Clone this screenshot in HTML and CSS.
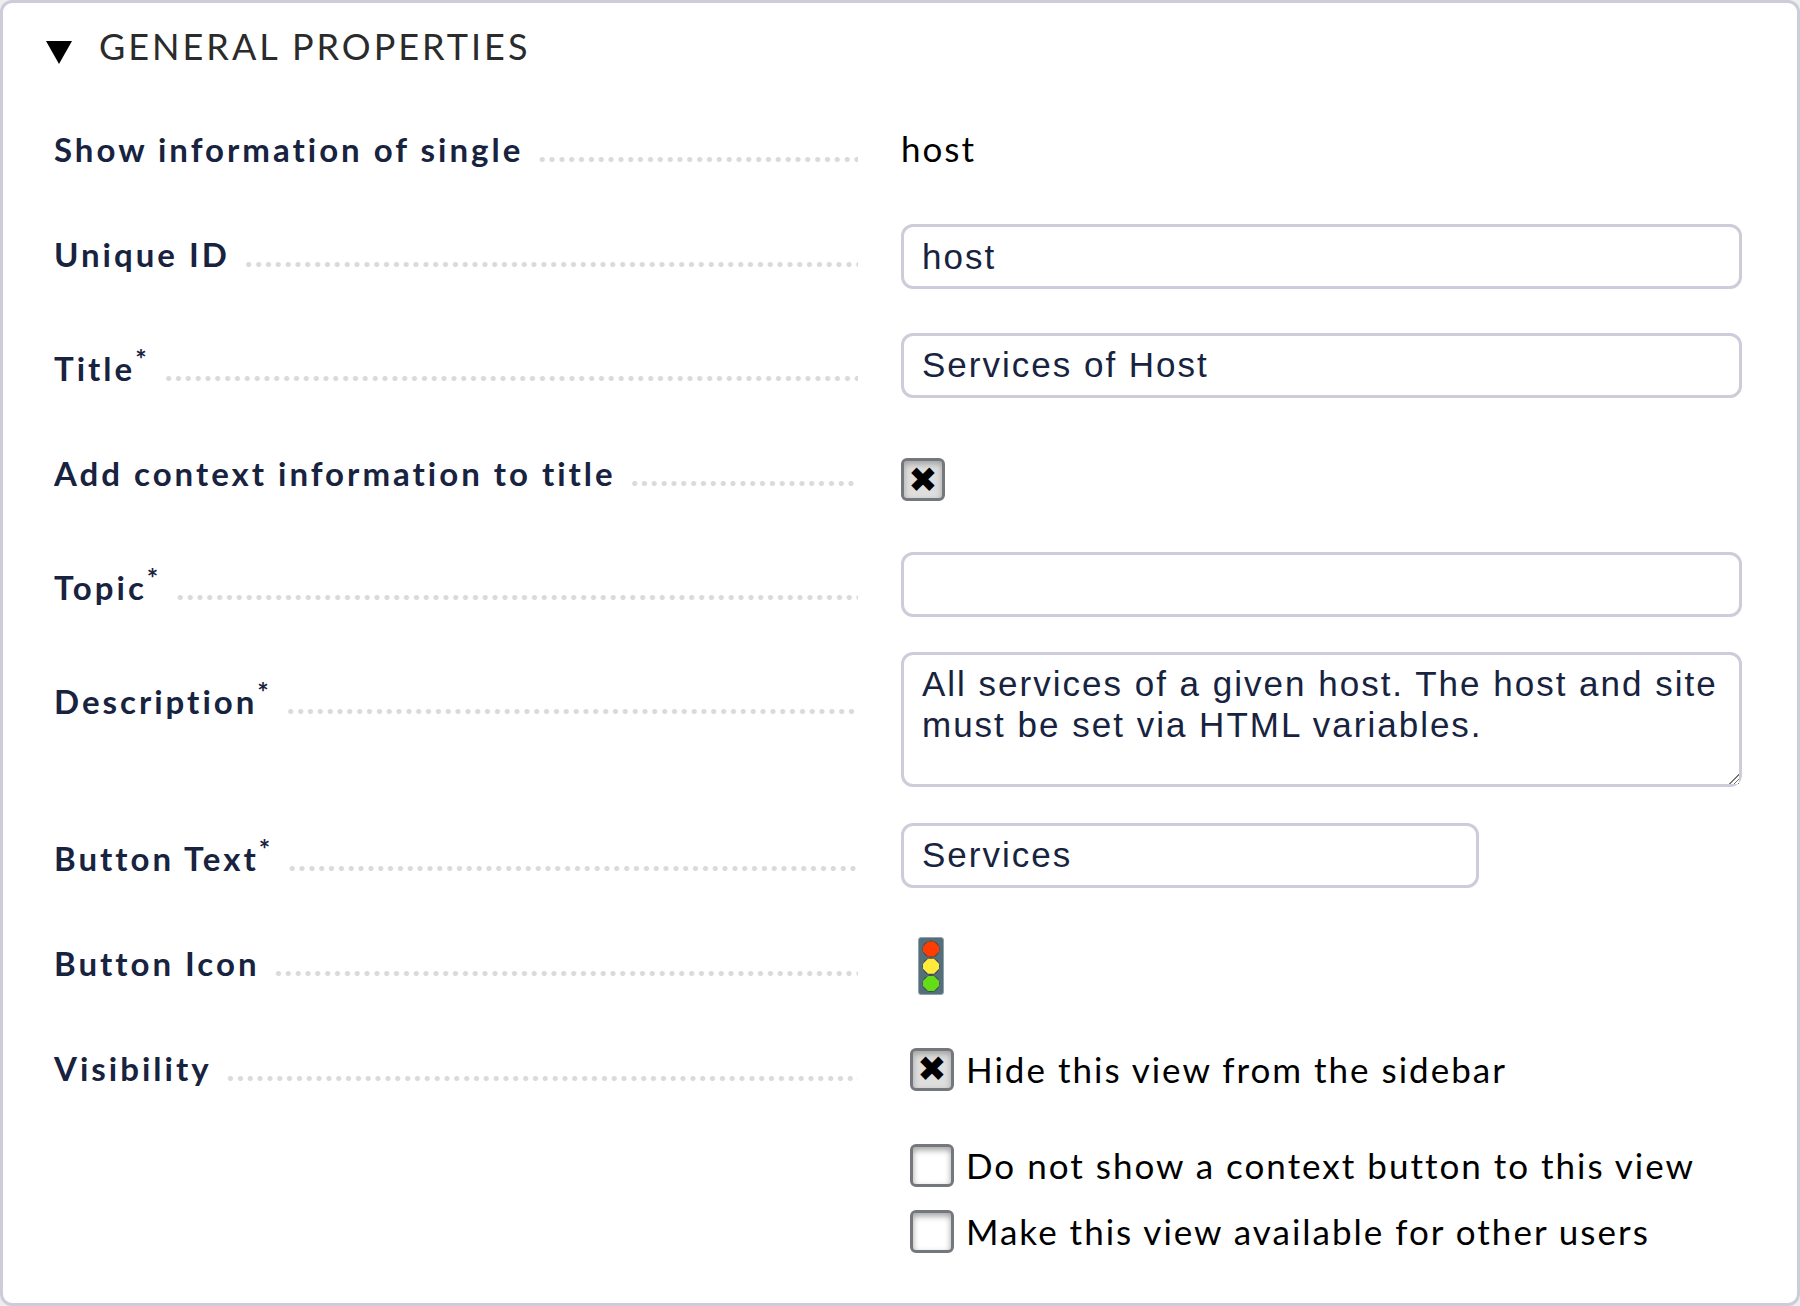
FILE: index.html
```html
<!DOCTYPE html>
<html lang="en">
<head>
<meta charset="utf-8">
<title>General Properties</title>
<link rel="stylesheet" href="styles.css">
</head>
<body>
<form class="panel">
  <h2 class="panel-title">
    <button type="button" class="toggle" aria-expanded="true">
      <svg class="arrow" viewBox="0 0 26 23" aria-hidden="true"><path d="M0 0H26L13 23Z"/></svg>
      <span>GENERAL PROPERTIES</span>
    </button>
  </h2>

  <div class="row">
    <div class="legend"><span class="name">Show information of single</span><span class="dots" aria-hidden="true"></span></div>
    <div class="control text">host</div>
  </div>
  <div class="row">
    <div class="legend"><label class="name" for="uid">Unique ID</label><span class="dots" aria-hidden="true"></span></div>
    <div class="control"><input class="field" id="uid" type="text" value="host"></div>
  </div>
  <div class="row required">
    <div class="legend"><label class="name" for="title">Title<sup>*</sup></label><span class="dots" aria-hidden="true"></span></div>
    <div class="control"><input class="field" id="title" type="text" value="Services of Host"></div>
  </div>
  <div class="row">
    <div class="legend"><label class="name" for="context">Add context information to title</label><span class="dots" aria-hidden="true"></span></div>
    <div class="control tick"><input class="check" id="context" type="checkbox" checked></div>
  </div>
  <div class="row required">
    <div class="legend"><label class="name" for="topic">Topic<sup>*</sup></label><span class="dots" aria-hidden="true"></span></div>
    <div class="control"><input class="field" id="topic" type="text" value=""></div>
  </div>
  <div class="row required">
    <div class="legend"><label class="name" for="description">Description<sup>*</sup></label><span class="dots" aria-hidden="true"></span></div>
    <div class="control"><textarea class="field area" id="description" rows="3">All services of a given host. The host and site must be set via HTML variables.</textarea></div>
  </div>
  <div class="row required">
    <div class="legend"><label class="name" for="button-text">Button Text<sup>*</sup></label><span class="dots" aria-hidden="true"></span></div>
    <div class="control"><input class="field short" id="button-text" type="text" value="Services"></div>
  </div>
  <div class="row">
    <div class="legend"><span class="name">Button Icon</span><span class="dots" aria-hidden="true"></span></div>
    <div class="control">
      <button type="button" class="icon-button" aria-label="Choose icon">
        <svg class="lights" viewBox="0 0 26 58" aria-hidden="true">
          <rect x="0.5" y="0.5" width="25" height="57" rx="2.5" fill="#546e7a" stroke="#8fa3ad"/>
          <g fill="#3f4a50">
            <circle cx="13" cy="12" r="8.6"/><circle cx="13" cy="29.300" r="8.600"/><circle cx="13" cy="46.500" r="8.600"/>
          </g>
          <path fill="#ff3d00" d="M10 4.500h6l5 5v5l-5 5h-6l-5-5v-5z"/>
          <path fill="#ffeb3b" d="M10 21.800h6l5 5v5l-5 5h-6l-5-5v-5z"/>
          <path fill="#64dd17" d="M10 39h6l5 5v5l-5 5h-6l-5-5v-5z"/>
        </svg>
      </button>
    </div>
  </div>
  <div class="row">
    <div class="legend"><span class="name" id="visibility">Visibility</span><span class="dots" aria-hidden="true"></span></div>
    <div class="options" role="group" aria-labelledby="visibility">
      <label class="option first"><input class="check" type="checkbox" checked>Hide this view from the sidebar</label>
      <label class="option"><input class="check" type="checkbox">Do not show a context button to this view</label>
      <label class="option"><input class="check" type="checkbox">Make this view available for other users</label>
    </div>
  </div>
</form>
</body>
</html>
```
FILE: styles.css
```css
* {
  box-sizing: border-box;
}

body {
  margin: 0;
  background: #eeeeee;
  color: #000000;
  font-family: Lato, sans-serif;
  font-size: 35px;
  line-height: 44px;
  letter-spacing: 2px;
}

.panel {
  min-height: 100vh;
  padding: 21px 55px 24px 51px;
  background: #ffffff;
  border: 3px solid #ccccda;
  border-radius: 12px;
}

.panel-title {
  margin: 0 0 34px -8px;
  font-size: 36px;
  font-weight: 400;
  letter-spacing: 3px;
}

.toggle {
  display: flex;
  align-items: center;
  gap: 27px;
  padding: 0;
  border: 0;
  background: none;
  color: #2b2b2b;
  font: inherit;
  letter-spacing: inherit;
}

.arrow {
  width: 26px;
  height: 23px;
  margin-top: 12px;
  fill: #000000;
}

.row {
  display: grid;
  grid-template-columns: minmax(0, 804fr) minmax(0, 841fr);
  column-gap: 43px;
  min-height: 105px;
}

.required {
  min-height: 114px;
}

.legend {
  display: flex;
  align-items: baseline;
  gap: 15px;
  padding-top: 25px;
  overflow: hidden;
  color: #17233f;
  font-size: 33px;
}

.required .legend {
  padding-top: 34px;
}

.name {
  flex: none;
  font-weight: 700;
  letter-spacing: 3px;
}

.name sup {
  font-size: 27px;
  line-height: 0;
}

.dots {
  flex: 1;
  height: 44px;
  min-width: 0;
  overflow: hidden;
  color: #dadada;
  font-weight: 700;
  letter-spacing: 2px;
  white-space: nowrap;
}

.dots::before {
  content: "..........................................................................................";
}

.control {
  display: flex;
  align-items: center;
  padding: 8px 0 14px;
}

.text {
  align-items: flex-start;
  padding-top: 24px;
}

.tick {
  padding: 12px 0 10px;
}

.field {
  width: 100%;
  height: 65px;
  padding: 0 18px;
  border: 3px solid #ccccda;
  border-radius: 12px;
  background: #ffffff;
  color: #17233f;
  font-family: "Liberation Sans", sans-serif;
  font-size: 35px;
  line-height: 41px;
  letter-spacing: 2px;
}

.required .control {
  padding: 7px 0 15px;
}

.area {
  height: 135px;
  padding: 8px 18px 0;
  overflow: hidden;
}

.area::-webkit-resizer {
  background:
    linear-gradient(135deg, #ffffff 54%, transparent 54%),
    repeating-linear-gradient(135deg, #ffffff 0 2px, #777777 2px 3px);
}

.short {
  width: 578px;
}

.check {
  display: grid;
  place-items: center;
  flex: none;
  width: 44px;
  height: 43px;
  margin: 0;
  appearance: none;
  border: 3px solid #74787d;
  border-radius: 6px;
  background: #ffffff;
  box-shadow: inset 0 3px 6px #a0a0a0;
}

.check:checked {
  background: #dedede;
}

.check:checked::before {
  content: "✖";
  color: #000000;
  font-family: "DejaVu Sans", sans-serif;
  font-size: 35px;
  line-height: 36px;
  letter-spacing: 0;
}

.icon-button {
  display: flex;
  padding: 0 17px;
  border: 0;
  background: none;
}

.lights {
  width: 26px;
  height: 58px;
}

.options {
  padding: 26px 0 0 9px;
}

.option {
  display: flex;
  align-items: center;
  gap: 12px;
  margin-bottom: 22px;
  white-space: nowrap;
}

.first {
  margin-bottom: 52px;
}
```
